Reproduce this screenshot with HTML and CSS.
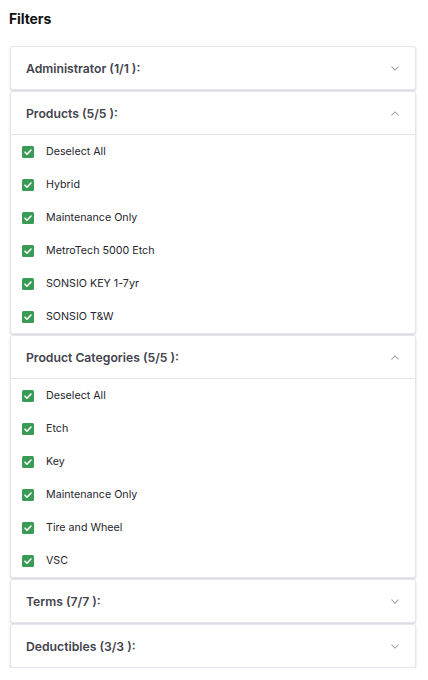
FILE: index.html
```html
<!DOCTYPE html>
<html>
<head>
<meta charset="utf-8">
<link rel="stylesheet" href="styles.css">
</head>
<body>
<div class="page">
  <h1 class="title">Filters</h1>
  <div class="cards">
    <div class="card">
      <div class="head"><span>Administrator (1/1 ):</span><svg class="chev" viewBox="0 0 10 6"><path d="M1 1l4 4 4-4"/></svg></div>
    </div>
    <div class="card">
      <div class="head open"><span>Products (5/5 ):</span><svg class="chev" viewBox="0 0 10 6"><path d="M1 5l4-4 4 4"/></svg></div>
      <ul class="list">
        <li><span class="cb"><svg viewBox="0 0 12 12"><path d="M3 6.2l2 2 4-4.2"/></svg></span>Deselect All</li>
        <li><span class="cb"><svg viewBox="0 0 12 12"><path d="M3 6.2l2 2 4-4.2"/></svg></span>Hybrid</li>
        <li><span class="cb"><svg viewBox="0 0 12 12"><path d="M3 6.2l2 2 4-4.2"/></svg></span>Maintenance Only</li>
        <li><span class="cb"><svg viewBox="0 0 12 12"><path d="M3 6.2l2 2 4-4.2"/></svg></span>MetroTech 5000 Etch</li>
        <li><span class="cb"><svg viewBox="0 0 12 12"><path d="M3 6.2l2 2 4-4.2"/></svg></span>SONSIO KEY 1-7yr</li>
        <li><span class="cb"><svg viewBox="0 0 12 12"><path d="M3 6.2l2 2 4-4.2"/></svg></span>SONSIO T&amp;W</li>
      </ul>
    </div>
    <div class="card">
      <div class="head open"><span>Product Categories (5/5 ):</span><svg class="chev" viewBox="0 0 10 6"><path d="M1 5l4-4 4 4"/></svg></div>
      <ul class="list">
        <li><span class="cb"><svg viewBox="0 0 12 12"><path d="M3 6.2l2 2 4-4.2"/></svg></span>Deselect All</li>
        <li><span class="cb"><svg viewBox="0 0 12 12"><path d="M3 6.2l2 2 4-4.2"/></svg></span>Etch</li>
        <li><span class="cb"><svg viewBox="0 0 12 12"><path d="M3 6.2l2 2 4-4.2"/></svg></span>Key</li>
        <li><span class="cb"><svg viewBox="0 0 12 12"><path d="M3 6.2l2 2 4-4.2"/></svg></span>Maintenance Only</li>
        <li><span class="cb"><svg viewBox="0 0 12 12"><path d="M3 6.2l2 2 4-4.2"/></svg></span>Tire and Wheel</li>
        <li><span class="cb"><svg viewBox="0 0 12 12"><path d="M3 6.2l2 2 4-4.2"/></svg></span>VSC</li>
      </ul>
    </div>
    <div class="card">
      <div class="head"><span>Terms (7/7 ):</span><svg class="chev" viewBox="0 0 10 6"><path d="M1 1l4 4 4-4"/></svg></div>
    </div>
    <div class="card">
      <div class="head"><span>Deductibles (3/3 ):</span><svg class="chev" viewBox="0 0 10 6"><path d="M1 1l4 4 4-4"/></svg></div>
    </div>
  </div>
</div>
</body>
</html>
```
FILE: styles.css
```css
html, body { margin: 0; padding: 0; background: #fff; }
body { font-family: Inter, "Noto Sans", sans-serif; color: #1f2937; }
.page { padding: 10px 12px 0 10px; }
.title { margin: 0 0 0 -1px; font-size: 14px; font-weight: 700; line-height: 18px; color: #111; letter-spacing: -0.1px; }
.cards { margin-top: 18px; display: flex; flex-direction: column; gap: 1px; }
.card {
  background: #fff;
  border: 1px solid #e6e7ee;
  border-radius: 3px;
  box-shadow: 0 1px 2px rgba(90, 95, 120, 0.28);
}
.head {
  height: 42px;
  display: flex;
  align-items: center;
  justify-content: space-between;
  padding: 0 15px 0 15px;
  font-size: 12.2px;
  font-weight: 600;
  color: #43434d;
}
.head.open { border-bottom: 1px solid #e3e5ee; }
.chev { width: 8px; height: 5px; fill: none; stroke: #a4a7b4; stroke-width: 1.4; stroke-linecap: round; stroke-linejoin: round; margin-right: 1px; }
.list { list-style: none; margin: 0; padding: 0; }
.list li {
  height: 33px;
  display: flex;
  align-items: center;
  padding-left: 11px;
  font-size: 10.7px;
  color: #26262e;
}
.cb {
  width: 12px; height: 12px;
  background: #3a9b56;
  border-radius: 1.5px;
  margin-right: 12px;
  display: flex;
}
.cb svg { width: 12px; height: 12px; fill: none; stroke: #fff; stroke-width: 1.6; stroke-linecap: round; stroke-linejoin: round; }
```
